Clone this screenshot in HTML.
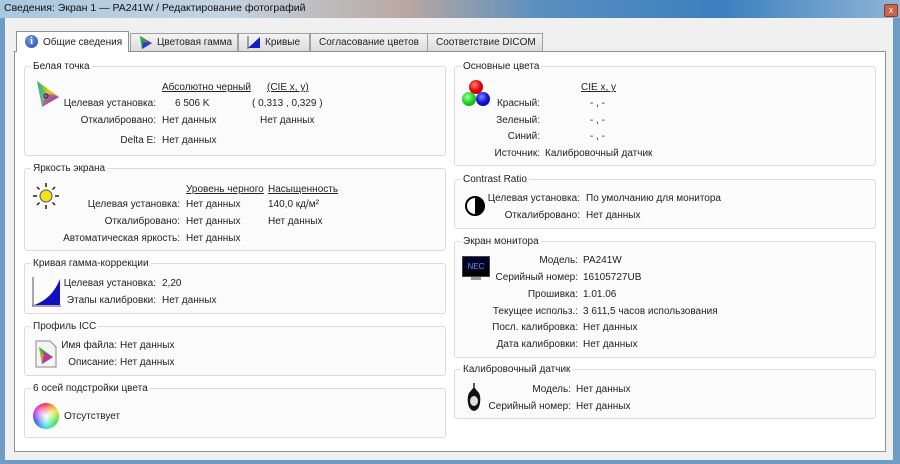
<!DOCTYPE html>
<html><head><meta charset="utf-8"><style>
*{margin:0;padding:0;box-sizing:border-box}
body{width:900px;height:464px;overflow:hidden;position:relative;background:#6f9cc4;font-family:"Liberation Sans","DejaVu Sans",sans-serif;font-size:10px;color:#222}
.a{position:absolute;white-space:nowrap;line-height:13px}
.r{text-align:right}
.u{text-decoration:underline}
.g{position:absolute;border:1px solid #dcdcdc;border-radius:3px;background:#fbfbfb}
.gt{position:absolute;top:-7px;left:6px;padding:0 2px;line-height:13px;white-space:nowrap;background:linear-gradient(#fff 50%,#fbfbfb 50%)}
.tab{position:absolute;top:33px;height:18px;border:1px solid #a0a0a0;border-bottom:none;background:linear-gradient(#f4f4f4,#dcdcdc);line-height:17px;padding-left:8px;white-space:nowrap;overflow:hidden}
</style></head><body>
<div style="position:absolute;left:0;top:0;width:900px;height:18px;background:linear-gradient(90deg,#a9c7df 0%,#c4d4e2 25%,#b9a8a0 45%,#5a8fc0 60%,#3b7fbf 80%,#8fb5d6 100%)"></div>
<div class="a" style="left:4px;top:2px;font-size:10.5px;color:#111">Сведения: Экран 1 — PA241W / Редактирование фотографий</div>
<div style="position:absolute;left:884px;top:4px;width:14px;height:13px;background:#c8664a;border:1px solid #8a3b2a;border-radius:2px;color:#fff;font-size:9px;text-align:center;line-height:11px">x</div>
<div style="position:absolute;left:5px;top:18px;width:888px;height:442px;background:#f0f0f0"></div>
<div style="position:absolute;left:14px;top:51px;width:872px;height:401px;background:#fff;border:1px solid #8e8f8f"></div>

<div class="tab" style="left:130px;width:108px;padding-left:26px">Цветовая гамма</div>
<div class="tab" style="left:238px;width:72px;padding-left:26px">Кривые</div>
<div class="tab" style="left:310px;width:118px">Согласование цветов</div>
<div class="tab" style="left:427px;width:116px">Соответствие DICOM</div>
<div class="tab" style="left:16px;top:31px;height:21px;width:113px;background:#fff;border-color:#8e8f8f;padding-left:26px;line-height:22px">Общие сведения</div>
<div style="position:absolute;left:25px;top:35px;width:13px;height:13px;border-radius:50%;background:radial-gradient(circle at 40% 35%,#6f9be0,#1d4aa8);color:#fff;font:bold 10px 'Liberation Serif',serif;text-align:center;line-height:13px">i</div>
<svg style="position:absolute;left:139px;top:36px" width="13" height="13"><polygon points="1,0 13,7 3,13" fill="#c03080"/><polygon points="1,0 8,5 3,13" fill="#20b040"/><polygon points="4,6 13,7 3,13" fill="#2040d0"/></svg>
<svg style="position:absolute;left:247px;top:36px" width="14" height="13"><polygon points="1,12 13,1 13,12" fill="#1020c0"/><line x1="1" y1="0" x2="1" y2="13" stroke="#555"/></svg>

<div class="g" style="left:24px;top:66px;width:422px;height:90px"><div class="gt">Белая точка</div></div>
<div class="g" style="left:24px;top:168px;width:422px;height:83px"><div class="gt">Яркость экрана</div></div>
<div class="g" style="left:24px;top:263px;width:422px;height:51px"><div class="gt">Кривая гамма-коррекции</div></div>
<div class="g" style="left:24px;top:326px;width:422px;height:50px"><div class="gt">Профиль ICC</div></div>
<div class="g" style="left:24px;top:388px;width:422px;height:50px"><div class="gt">6 осей подстройки цвета</div></div>
<div class="g" style="left:454px;top:66px;width:422px;height:100px"><div class="gt">Основные цвета</div></div>
<div class="g" style="left:454px;top:179px;width:422px;height:50px"><div class="gt">Contrast Ratio</div></div>
<div class="g" style="left:454px;top:241px;width:422px;height:117px"><div class="gt">Экран монитора</div></div>
<div class="g" style="left:454px;top:369px;width:422px;height:50px"><div class="gt">Калибровочный датчик</div></div>

<svg style="position:absolute;left:34px;top:80px" width="26" height="28"><defs><linearGradient id="t1" x1="0" y1="0" x2="1" y2="1"><stop offset="0" stop-color="#20c020"/><stop offset=".5" stop-color="#e0d020"/><stop offset="1" stop-color="#e02060"/></linearGradient></defs><polygon points="3,1 25,17 8,27" fill="url(#t1)"/><polygon points="3,1 12,13 8,27" fill="#30a0e0" opacity=".6"/><polygon points="8,27 12,13 25,17" fill="#8030e0" opacity=".6"/><circle cx="12" cy="16" r="2" fill="none" stroke="#222"/></svg>
<div class="a u" style="left:162px;top:81px">Абсолютно черный</div>
<div class="a u" style="left:267px;top:81px">(CIE x, y)</div>
<div class="a r" style="right:744px;top:97px">Целевая установка:</div>
<div class="a" style="left:175px;top:97px">6 506 K</div>
<div class="a" style="left:252px;top:97px">( 0,313 , 0,329 )</div>
<div class="a r" style="right:744px;top:114px">Откалибровано:</div>
<div class="a" style="left:162px;top:114px">Нет данных</div>
<div class="a" style="left:260px;top:114px">Нет данных</div>
<div class="a r" style="right:744px;top:134px">Delta E:</div>
<div class="a" style="left:162px;top:134px">Нет данных</div>

<svg style="position:absolute;left:32px;top:182px" width="28" height="28"><g stroke="#222" stroke-width="1.5"><line x1="14" y1="1" x2="14" y2="5"/><line x1="14" y1="23" x2="14" y2="27"/><line x1="1" y1="14" x2="5" y2="14"/><line x1="23" y1="14" x2="27" y2="14"/><line x1="5" y1="5" x2="7.5" y2="7.5"/><line x1="20.5" y1="20.5" x2="23" y2="23"/><line x1="5" y1="23" x2="7.5" y2="20.5"/><line x1="20.5" y1="7.5" x2="23" y2="5"/></g><circle cx="14" cy="14" r="6" fill="#f0e020" stroke="#555"/></svg>
<div class="a u" style="left:186px;top:183px">Уровень черного</div>
<div class="a u" style="left:268px;top:183px">Насыщенность</div>
<div class="a r" style="right:720px;top:198px">Целевая установка:</div>
<div class="a" style="left:186px;top:198px">Нет данных</div>
<div class="a" style="left:268px;top:198px">140,0 кд/м²</div>
<div class="a r" style="right:720px;top:215px">Откалибровано:</div>
<div class="a" style="left:186px;top:215px">Нет данных</div>
<div class="a" style="left:268px;top:215px">Нет данных</div>
<div class="a r" style="right:720px;top:232px">Автоматическая яркость:</div>
<div class="a" style="left:186px;top:232px">Нет данных</div>

<svg style="position:absolute;left:32px;top:277px" width="30" height="30"><line x1="1" y1="0" x2="1" y2="29" stroke="#555"/><line x1="0" y1="29" x2="29" y2="29" stroke="#555"/><path d="M2,28 Q20,22 28,2 L28,28 Z" fill="#1010c0"/></svg>
<div class="a r" style="right:744px;top:277px">Целевая установка:</div>
<div class="a" style="left:162px;top:277px">2,20</div>
<div class="a r" style="right:744px;top:294px">Этапы калибровки:</div>
<div class="a" style="left:162px;top:294px">Нет данных</div>

<svg style="position:absolute;left:35px;top:340px" width="22" height="28"><path d="M1,1 H15 L21,7 V27 H1 Z" fill="#f4f4f4" stroke="#888"/><polygon points="4,7 18,17 7,24" fill="#20b040"/><polygon points="8,12 18,17 7,24" fill="#c030a0"/><polygon points="4,7 9,15 7,24" fill="#e0b020" opacity=".7"/></svg>
<div class="a r" style="right:783px;top:339px">Имя файла:</div>
<div class="a" style="left:120px;top:339px">Нет данных</div>
<div class="a r" style="right:783px;top:356px">Описание:</div>
<div class="a" style="left:120px;top:356px">Нет данных</div>

<div style="position:absolute;left:33px;top:403px;width:26px;height:26px;border-radius:50%;background:conic-gradient(#f03030,#f0e030,#30e030,#30e0e0,#3050f0,#e030e0,#f03030)"><div style="position:absolute;inset:0;border-radius:50%;background:radial-gradient(#fff 0%,rgba(255,255,255,.5) 40%,rgba(255,255,255,0) 70%)"></div></div>
<div class="a" style="left:64px;top:410px">Отсутствует</div>

<div style="position:absolute;left:469px;top:80px;width:14px;height:14px;border-radius:50%;background:radial-gradient(circle at 40% 35%,#ff8080,#e00000 50%,#900)"></div>
<div style="position:absolute;left:462px;top:92px;width:14px;height:14px;border-radius:50%;background:radial-gradient(circle at 40% 35%,#a0ffa0,#20d020 50%,#080)"></div>
<div style="position:absolute;left:476px;top:92px;width:14px;height:14px;border-radius:50%;background:radial-gradient(circle at 40% 35%,#8080ff,#1010d0 50%,#008)"></div>
<div class="a u" style="left:581px;top:81px">CIE x, y</div>
<div class="a r" style="right:360px;top:97px">Красный:</div><div class="a" style="left:590px;top:97px">- , -</div>
<div class="a r" style="right:360px;top:114px">Зеленый:</div><div class="a" style="left:590px;top:114px">- , -</div>
<div class="a r" style="right:360px;top:130px">Синий:</div><div class="a" style="left:590px;top:130px">- , -</div>
<div class="a r" style="right:360px;top:147px">Источник:</div><div class="a" style="left:545px;top:147px">Калибровочный датчик</div>

<div style="position:absolute;left:465px;top:196px;width:20px;height:20px;border-radius:50%;border:2.5px solid #000;background:linear-gradient(90deg,#fff 50%,#000 50%)"></div>
<div class="a r" style="right:320px;top:192px">Целевая установка:</div><div class="a" style="left:586px;top:192px">По умолчанию для монитора</div>
<div class="a r" style="right:320px;top:209px">Откалибровано:</div><div class="a" style="left:586px;top:209px">Нет данных</div>

<div style="position:absolute;left:462px;top:256px;width:28px;height:21px;border:1px solid #444;color:#6c8cff;font-size:8px;line-height:19px;text-align:center;background:linear-gradient(#000033,#000)">NEC</div>
<div style="position:absolute;left:471px;top:277px;width:10px;height:3px;background:#999"></div>
<div class="a r" style="right:322px;top:254px">Модель:</div><div class="a" style="left:583px;top:254px">PA241W</div>
<div class="a r" style="right:322px;top:271px">Серийный номер:</div><div class="a" style="left:583px;top:271px">16105727UB</div>
<div class="a r" style="right:322px;top:288px">Прошивка:</div><div class="a" style="left:583px;top:288px">1.01.06</div>
<div class="a r" style="right:322px;top:305px">Текущее использ.:</div><div class="a" style="left:583px;top:305px">3 611,5 часов использования</div>
<div class="a r" style="right:322px;top:321px">Посл. калибровка:</div><div class="a" style="left:583px;top:321px">Нет данных</div>
<div class="a r" style="right:322px;top:338px">Дата калибровки:</div><div class="a" style="left:583px;top:338px">Нет данных</div>

<svg style="position:absolute;left:466px;top:383px" width="16" height="30"><line x1="8" y1="0" x2="8" y2="5" stroke="#222" stroke-width="1.5"/><path d="M8,4 L13,10 Q15,14 14,20 Q13,27 8,28 Q3,27 2,20 Q1,14 3,10 Z" fill="#111"/><ellipse cx="8" cy="18" rx="4" ry="5" fill="#ddd"/></svg>
<div class="a r" style="right:329px;top:383px">Модель:</div><div class="a" style="left:576px;top:383px">Нет данных</div>
<div class="a r" style="right:329px;top:400px">Серийный номер:</div><div class="a" style="left:576px;top:400px">Нет данных</div>
</body></html>
